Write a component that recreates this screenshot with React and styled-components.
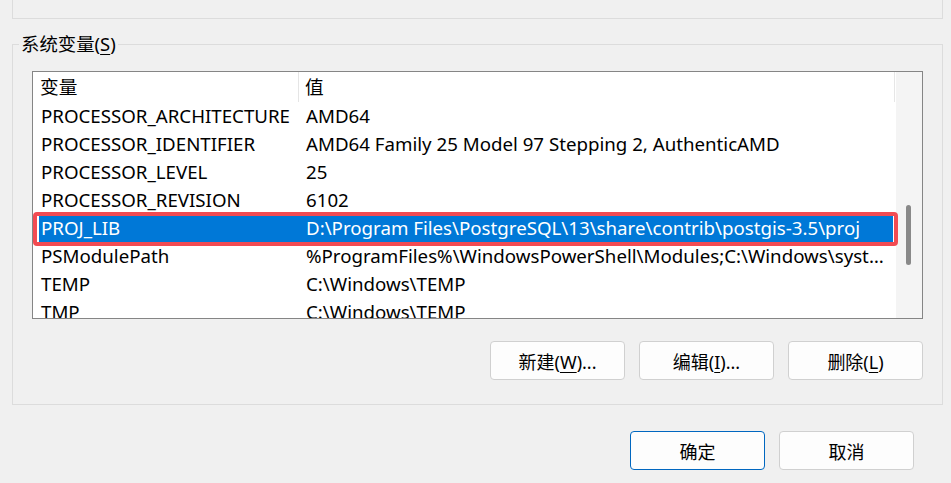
import styled, { createGlobalStyle } from 'styled-components';

const GlobalStyle = createGlobalStyle`
  html, body {
    margin: 0;
    background: #f0f0f0;
  }
  body {
    font-family: "Noto Sans", "Noto Sans CJK SC", sans-serif;
    color: #000;
  }
`;

// Styled Components
const Window = styled.div`
  width: 951px;
  height: 483px;
  overflow: hidden;
  display: flex;
  flex-direction: column;
  font-size: 18px;
`;

const UserGroup = styled.div`
  height: 18px;
  margin: 0 8px 0 12px;
  border: 1px solid #dcdcdc;
  border-top: none;
`;

const Group = styled.fieldset`
  margin: 14px 8px 0 12px;
  padding: 16px 19px 24px;
  border: 1px solid #dcdcdc;
  min-width: 0;
`;

const Legend = styled.legend`
  margin-left: -13px;
  padding: 0 2px;
  line-height: 22px;
  font-size: 18.4px;
`;

const ListBox = styled.div`
  height: 246px;
  border: 1px solid #858585;
  background: #fff;
  display: flex;
  overflow: hidden;
  font-size: 18.7px;
`;

const ListContent = styled.div`
  flex: 1;
  min-width: 0;
  display: flex;
  flex-direction: column;
`;

const Header = styled.div`
  height: 30px;
  flex-shrink: 0;
  display: grid;
  grid-template-columns: 266px 1fr;
  border-right: 1px solid #e6e6e6;
  margin-right: 1px;
`;

const HeaderCell = styled.div`
  line-height: 30px;
  padding-left: ${({ $first }) => ($first ? '7px' : '6px')};
  border-right: ${({ $first }) => ($first ? '1px solid #e5e5e5' : 'none')};
`;

const Row = styled.div`
  position: relative;
  flex-shrink: 0;
  height: 28px;
  margin: 0 3px 0 6px;
  display: grid;
  grid-template-columns: 266px 1fr;
  background: ${({ $selected }) => ($selected ? '#0078d7' : 'transparent')};
  color: ${({ $selected }) => ($selected ? '#fff' : '#000')};
  ${({ $marked }) =>
    $marked &&
    `
    &::after {
      content: '';
      position: absolute;
      top: -2px;
      bottom: -4px;
      left: -6px;
      right: -5px;
      border: 4px solid #f24b52;
      border-radius: 4px;
      pointer-events: none;
    }
  `}
`;

const Cell = styled.div`
  line-height: 28px;
  padding-left: ${({ $value }) => ($value ? '1px' : '2px')};
  padding-right: ${({ $value }) => ($value ? '8px' : '0')};
  white-space: nowrap;
  overflow: hidden;
  text-overflow: ellipsis;
`;

const ScrollTrack = styled.div`
  width: 26px;
  flex-shrink: 0;
  background: #f4f4f4;
`;

const ScrollThumb = styled.div`
  width: 5px;
  height: 60px;
  margin-left: 10px;
  border-radius: 3px;
  background: #898989;
`;

const ButtonRow = styled.div`
  display: flex;
  justify-content: flex-end;
  gap: 14px;
  margin-top: 22px;
`;

const Button = styled.button`
  width: 135px;
  height: 39px;
  padding: 0;
  border: 1px solid ${({ $primary }) => ($primary ? '#0067c0' : '#d0d0d0')};
  border-radius: 4px;
  background: #fdfdfd;
  font-family: inherit;
  font-size: 18px;
  color: #000;
`;

const Footer = styled.div`
  display: flex;
  justify-content: flex-end;
  gap: 14px;
  margin-top: 26px;
  padding-right: 37px;
`;

const Key = styled.span`
  text-decoration: underline;
  text-underline-offset: 3px;
`;

const variables = [
  { name: 'PROCESSOR_ARCHITECTURE', value: 'AMD64' },
  { name: 'PROCESSOR_IDENTIFIER', value: 'AMD64 Family 25 Model 97 Stepping 2, AuthenticAMD' },
  { name: 'PROCESSOR_LEVEL', value: '25' },
  { name: 'PROCESSOR_REVISION', value: '6102' },
  { name: 'PROJ_LIB', value: 'D:\\Program Files\\PostgreSQL\\13\\share\\contrib\\postgis-3.5\\proj', selected: true },
  {
    name: 'PSModulePath',
    value: '%ProgramFiles%\\WindowsPowerShell\\Modules;C:\\Windows\\system32\\WindowsPowerShell\\v1.0\\Modules',
  },
  { name: 'TEMP', value: 'C:\\Windows\\TEMP' },
  { name: 'TMP', value: 'C:\\Windows\\TEMP' },
  { name: 'USERNAME', value: 'SYSTEM' },
];

const App = () => {
  // scroll position of the list
  const thumbTop = 133;

  return (
    <Window>
      <GlobalStyle />
      <UserGroup />

      <Group>
        <Legend>
          系统变量(<Key>S</Key>)
        </Legend>

        <ListBox>
          <ListContent>
            <Header>
              <HeaderCell $first>变量</HeaderCell>
              <HeaderCell>值</HeaderCell>
            </Header>
            {variables.map(({ name, value, selected }) => (
              <Row key={name} $selected={selected} $marked={selected}>
                <Cell>{name}</Cell>
                <Cell $value>{value}</Cell>
              </Row>
            ))}
          </ListContent>
          <ScrollTrack>
            <ScrollThumb style={{ marginTop: thumbTop }} />
          </ScrollTrack>
        </ListBox>

        <ButtonRow>
          <Button>
            新建(<Key>W</Key>)...
          </Button>
          <Button>
            编辑(<Key>I</Key>)...
          </Button>
          <Button>
            删除(<Key>L</Key>)
          </Button>
        </ButtonRow>
      </Group>

      <Footer>
        <Button $primary>确定</Button>
        <Button>取消</Button>
      </Footer>
    </Window>
  );
};

export default App;
